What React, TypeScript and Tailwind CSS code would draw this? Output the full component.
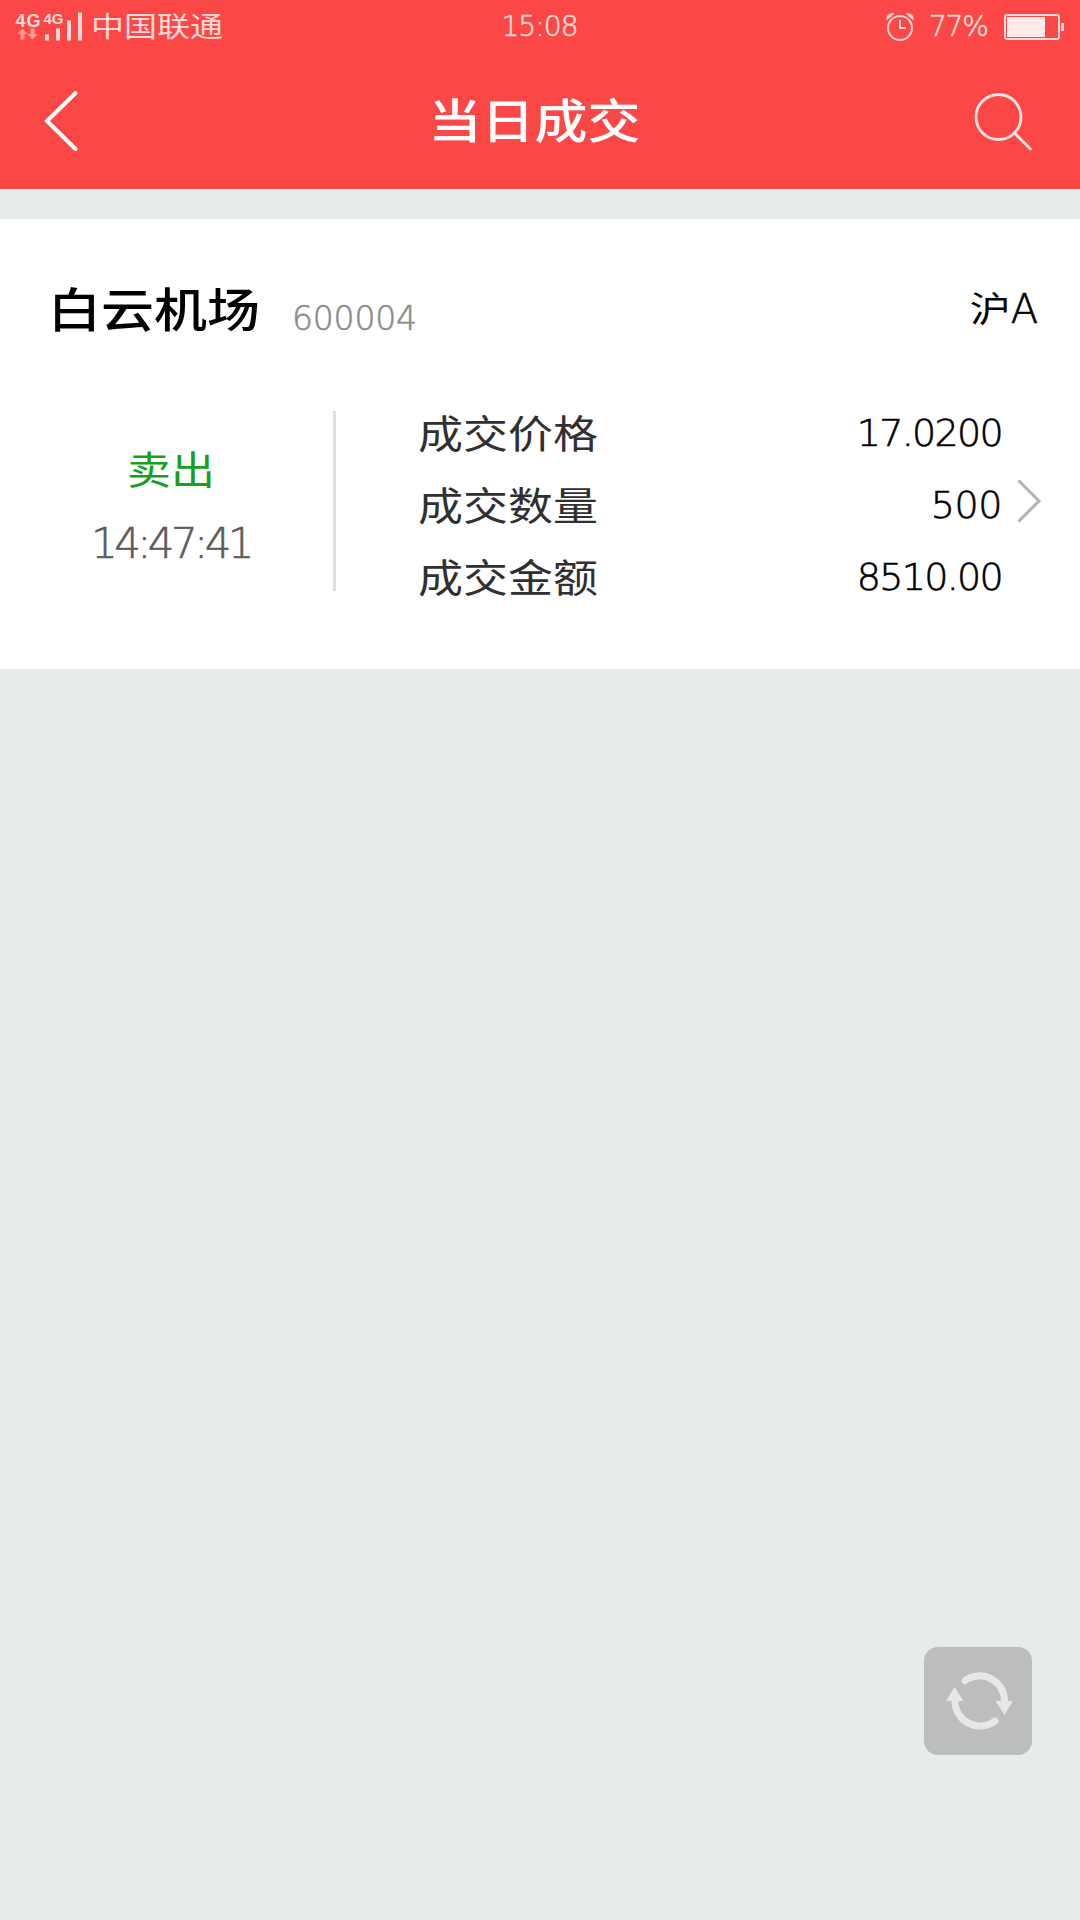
import type { ReactNode } from "react";

type Row = { label: string; value: string; tracking: string };

const ROWS: Row[] = [
  { label: "成交价格", value: "17.0200", tracking: "tracking-[-1.700px]" },
  { label: "成交数量", value: "500", tracking: "tracking-[-0.400px]" },
  { label: "成交金额", value: "8510.00", tracking: "tracking-[-1.700px]" },
];

function Han({ className = "", children }: { className?: string; children: ReactNode }) {
  return (
    <span className={`inline-block whitespace-nowrap leading-none scale-y-[0.87] font-['Noto_Sans_CJK_SC',sans-serif] ${className}`}>
      {children}
    </span>
  );
}

function Num({ className = "", children }: { className?: string; children: ReactNode }) {
  return (
    <span className={`inline-block whitespace-nowrap leading-none font-extralight [-webkit-text-stroke:0.6px_currentColor] font-['DejaVu_Sans_Light','DejaVu_Sans',sans-serif] ${className}`}>
      {children}
    </span>
  );
}

function Signal() {
  return (
    <svg width="68" height="42" viewBox="0 -6 68 42" fill="#ffd9d7">
      <text x="0.500" y="14.500" fontSize="18" fontWeight="700" textLength="25" fontFamily="Liberation Sans, sans-serif">4G</text>
      <text x="28.500" y="12" fontSize="15" fontWeight="700" textLength="20" fontFamily="Liberation Sans, sans-serif">4G</text>
      <path d="M7.500 16.500l5 5.500h-3V27.500h-4v-5.500h-3zM17.500 27.500l-5-5.500h3V16.500h4v5.500h3z" fill="#ff9894" />
      <path d="M30 22.500h4v6h-4zM41 16.500h4v12h-4zM52 8.500h4v20h-4zM63 0.500h4v28h-4z" />
    </svg>
  );
}

function AlarmIcon() {
  return (
    <svg width="30" height="30" viewBox="0 0 30 30" fill="none" stroke="#ffd0ce" strokeWidth="2">
      <circle cx="15" cy="16" r="12" />
      <path d="M15 8v8h6" />
      <path d="M1.500 8.500a6 6 0 0 1 8-7zM28.500 8.500a6 6 0 0 0-8-7z" fill="#ffd0ce" stroke="none" />
    </svg>
  );
}

function BatteryIcon() {
  return (
    <svg width="60" height="26" viewBox="0 0 60 26">
      <rect x="1" y="1" width="54" height="24" rx="2" fill="none" stroke="#ffd9d7" strokeWidth="2" />
      <rect x="3" y="3" width="38" height="20" fill="#ffebea" />
      <path d="M57 9h3v8h-3z" fill="#ffd9d7" />
    </svg>
  );
}

function StatusBar() {
  return (
    <div className="flex h-[54px] items-center justify-between pl-[15px] pr-[16px] text-[#ffd9d7]">
      <div className="flex w-[300px] items-center">
        <Signal />
        <Han className="mb-[4px] ml-[8px] text-[33px]">中国联通</Han>
      </div>
      <Num className="text-[28px] tracking-[-0.900px]">15:08</Num>
      <div className="flex w-[300px] items-center justify-end">
        <AlarmIcon />
        <Num className="ml-[14px] mb-[1px] w-[63px] text-[28px] tracking-[-1.200px]">77%</Num>
        <span className="ml-[12px]"><BatteryIcon /></span>
      </div>
    </div>
  );
}

function NavBar() {
  return (
    <div className="flex h-[135px] items-center justify-between pl-[44px] pr-[47px]">
      <button className="mb-[2px] w-[60px]" aria-label="返回">
        <svg width="36" height="62" viewBox="0 0 36 62" fill="none" stroke="#fff" strokeWidth="4" strokeLinecap="round">
          <path d="M31.500 3L3 31l28.500 28" />
        </svg>
      </button>
      <Han className="mr-[8px] mb-[7px] text-[53px] font-medium text-white">当日成交</Han>
      <button className="w-[60px]" aria-label="搜索">
        <svg width="60" height="60" viewBox="0 0 60 60" fill="none" stroke="#ffe4e3" strokeWidth="2.800" strokeLinecap="round">
          <circle cx="25.500" cy="25" r="22.500" />
          <path d="M41.500 41L57.500 57" />
        </svg>
      </button>
    </div>
  );
}

function TradeCard() {
  return (
    <section className="mt-[30px] h-[450px] bg-white">
      <div className="flex h-[180px] items-center pl-[48px] pr-[42px]">
        <Han className="mb-[3px] text-[53px] font-medium text-black">白云机场</Han>
        <Num className="ml-[32px] mt-[18px] text-[33px] tracking-[-0.200px] text-[#8c8c8c]">600004</Num>
        <span className="ml-auto flex items-center text-black">
          <Han className="mb-[5px] text-[41px]">沪</Han>
          <Num className="text-[40px]">A</Num>
        </span>
      </div>
      <div className="flex h-[216px] items-start">
        <div className="mt-[12px] flex h-[180px] w-[336px] flex-col items-center border-r-3 border-[#e0e0e0] pt-[34px] pl-[9px]">
          <Han className="text-[44px] text-[#16a01e]">卖出</Han>
          <Num className="mt-[34px] text-[42px] tracking-[-3.600px] text-[#5c5c5c]">14:47:41</Num>
        </div>
        <div className="ml-[82px] flex w-[584px] flex-col">
          {ROWS.map((r) => (
            <div key={r.label} className="flex h-[72px] items-center justify-between">
              <Han className="mb-[7px] text-[45px] text-[#303030]">{r.label}</Han>
              <Num className={`mb-[4px] text-[38px] text-black ${r.tracking}`}>{r.value}</Num>
            </div>
          ))}
        </div>
        <svg className="mt-[80px] ml-[15px]" width="26" height="44" viewBox="0 0 26 44" fill="none" stroke="#b4b4b4" strokeWidth="3">
          <path d="M1.500 1.500L22 22L1.500 42.500" />
        </svg>
      </div>
    </section>
  );
}

export default function App() {
  return (
    <div className="relative h-[1920px] w-[1080px] overflow-hidden bg-[#e8ebec]">
      <header className="bg-[#fb4847]">
        <StatusBar />
        <NavBar />
      </header>
      <TradeCard />

      {/* floating refresh */}
      <button className="absolute right-[48px] bottom-[165px] h-[108px] w-[108px] rounded-[14px] bg-[#bcbebd]" aria-label="刷新">
        <svg width="108" height="108" viewBox="0 0 108 108" fill="none" stroke="#e6e8e8" strokeWidth="7" strokeLinecap="round">
          <path d="M41 33.500A25 25 0 0 1 80.500 55" />
          <path d="M71 74A25 25 0 0 1 31 53" />
          <path d="M71.500 54h17.500L80.500 68zM22 54h17.500L30.500 40z" fill="#e6e8e8" stroke="none" />
        </svg>
      </button>
    </div>
  );
}
